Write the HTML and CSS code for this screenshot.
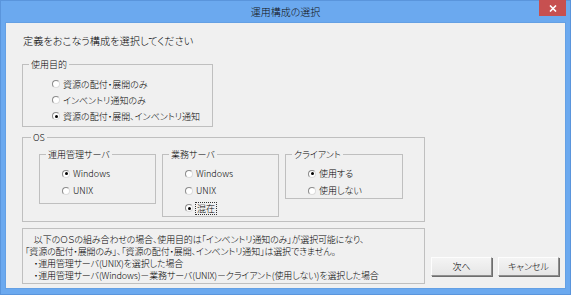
FILE: index.html
```html
<!DOCTYPE html>
<html lang="ja">
<head>
<meta charset="utf-8">
<title>運用構成の選択</title>
<link rel="stylesheet" href="styles.css">
</head>
<body>
<div class="window">
  <div class="titlebar">
    <span class="title">運用構成の選択</span>
    <span class="close"><svg width="8" height="7" viewBox="0 0 8 7"><path d="M1 0.5 L7 6.5 M7 0.5 L1 6.5" stroke="#fff" stroke-width="1.6" fill="none"/></svg></span>
  </div>
  <div class="client">
    <div class="heading">定義をおこなう構成を選択してください</div>

    <div class="group purpose">
      <div class="legend">使用目的</div>
      <div class="radios wide">
        <div class="radio"><span class="dot"></span><span>資源の配付・展開のみ</span></div>
        <div class="radio"><span class="dot"></span><span>インベントリ通知のみ</span></div>
        <div class="radio"><span class="dot on"></span><span>資源の配付・展開、インベントリ通知</span></div>
      </div>
    </div>

    <div class="group os">
      <div class="legend">OS</div>
      <div class="os-row">
        <div class="group sub g-mgr">
          <div class="legend">運用管理サーバ</div>
          <div class="radios">
            <div class="radio"><span class="dot on"></span><span>Windows</span></div>
            <div class="radio"><span class="dot"></span><span>UNIX</span></div>
          </div>
        </div>
        <div class="group sub g-biz">
          <div class="legend">業務サーバ</div>
          <div class="radios">
            <div class="radio"><span class="dot"></span><span>Windows</span></div>
            <div class="radio"><span class="dot"></span><span>UNIX</span></div>
            <div class="radio"><span class="dot on"></span><span class="focus">混在</span></div>
          </div>
        </div>
        <div class="group sub g-cli">
          <div class="legend">クライアント</div>
          <div class="radios">
            <div class="radio"><span class="dot on"></span><span>使用する</span></div>
            <div class="radio"><span class="dot"></span><span>使用しない</span></div>
          </div>
        </div>
      </div>
    </div>

    <div class="bottom">
      <div class="note">
        <div class="line">　以下のＯＳの組み合わせの場合、使用目的は「インベントリ通知のみ」が選択可能になり、</div>
        <div class="line">「資源の配付・展開のみ」、「資源の配付・展開、インベントリ通知」は選択できません。</div>
        <div class="line">　・運用管理サーバ(UNIX)を選択した場合</div>
        <div class="line">　・運用管理サーバ(Windows)－業務サーバ(UNIX)－クライアント(使用しない)を選択した場合</div>
      </div>
      <div class="buttons">
        <div class="btn">次へ</div>
        <div class="btn">キャンセル</div>
      </div>
    </div>
  </div>
</div>
</body>
</html>
```

FILE: styles.css
```css
* { box-sizing: border-box; }
html, body { margin: 0; padding: 0; }
body {
  width: 571px;
  height: 295px;
  overflow: hidden;
  font-family: "Noto Sans CJK JP", sans-serif;
  font-feature-settings: "palt";
  font-weight: 300;
  color: #000;
  background: #fff;
}
.window {
  width: 571px;
  height: 295px;
  background: #6ba9ef;
  border: 1px solid #5a95dc;
  display: flex;
  flex-direction: column;
}
.titlebar {
  height: 21px;
  position: relative;
  display: flex;
  align-items: center;
  justify-content: center;
}
.title {
  font-size: 10px;
  line-height: 12px;
  color: #111;
}
.close {
  position: absolute;
  top: -1px;
  right: 4px;
  width: 27px;
  height: 16px;
  background: #c75050;
  display: flex;
  align-items: center;
  justify-content: center;
}
.client {
  margin: 0 4px 5px 4px;
  flex: 1;
  background: #f0f0f0;
  border: 1px solid #64a0e4;
  padding: 11px 0 0 16px;
  font-size: 9px;
}
.heading {
  font-size: 10.2px;
  line-height: 14px;
  height: 14px;
  padding-left: 1px;
}
.group {
  border: 1px solid #bfbfbf;
}
.legend {
  margin-top: -6px;
  margin-left: 6px;
  padding: 0 2px;
  width: fit-content;
  line-height: 11px;
  height: 11px;
  background: #f0f0f0;
}
.purpose {
  width: 191px;
  height: 63px;
  margin-top: 16px;
}
.radios { margin-top: 6px; padding-left: 22px; }
.radios.wide { padding-left: 29px; }
.purpose .radio { height: 16px; }
.radio {
  height: 17px;
  display: flex;
  align-items: center;
}
.dot {
  width: 8px;
  height: 8px;
  border-radius: 50%;
  background: #fff;
  border: 1px solid #8b8b8b;
  border-right-color: #dcdcdc;
  border-bottom-color: #dcdcdc;
  margin-right: 3px;
  flex: none;
  display: flex;
  align-items: center;
  justify-content: center;
}
.dot.on::after {
  content: "";
  width: 3px;
  height: 3px;
  border-radius: 50%;
  background: #000;
}
.os {
  width: 403px;
  height: 85px;
  margin-top: 10px;
}
.os > .legend { margin-left: 8px; }
.os-row {
  display: flex;
  gap: 6px;
  margin-top: 11px;
  padding-left: 16px;
  align-items: flex-start;
}
.sub { width: 117px; }
.sub .radios { margin-top: 5px; }
.g-mgr { height: 50px; }
.g-biz { height: 63px; }
.g-cli { height: 45px; width: 118px; }
.g-biz .radio:last-child { height: 18px; }
.focus {
  outline: 1px dotted #333;
  outline-offset: 0px;
  padding: 0 1px;
  line-height: 11px;
}
.bottom {
  display: flex;
  margin-top: 6px;
  align-items: flex-start;
}
.note {
  width: 403px;
  height: 56px;
  border: 1px solid #bfbfbf;
  padding: 5px 0 0 2px;
  white-space: nowrap;
  letter-spacing: -0.15px;
}
.line {
  line-height: 12px;
  height: 12px;
}
.buttons {
  display: flex;
  gap: 6px;
  margin-left: 6px;
  margin-top: 29px;
}
.btn {
  width: 61px;
  height: 19px;
  border: 1px solid;
  border-color: #fdfdfd #8e8e8e #8e8e8e #fdfdfd;
  background: linear-gradient(#f4f4f4, #e6e6e6);
  box-shadow: 1px 1px 0 #6e6e6e;
  display: flex;
  align-items: center;
  justify-content: center;
  line-height: 11px;
}
```
